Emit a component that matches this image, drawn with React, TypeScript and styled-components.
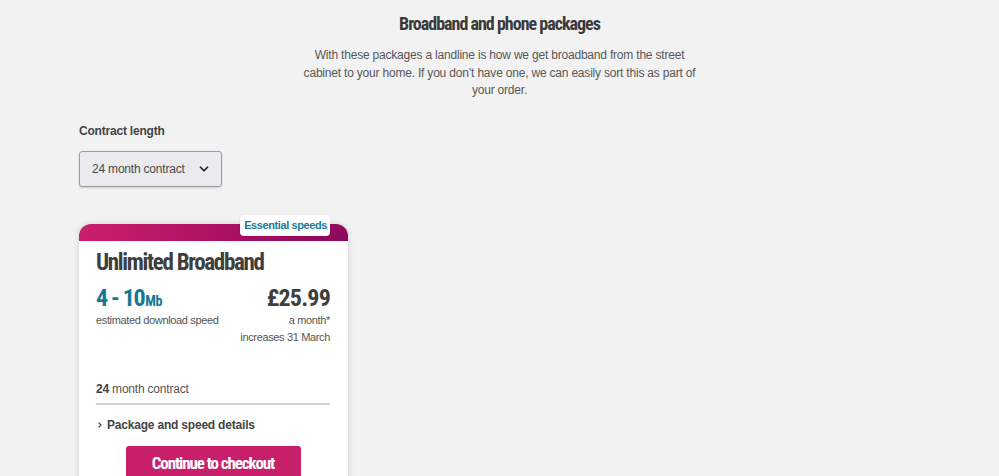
import React from 'react';
import styled, { createGlobalStyle } from 'styled-components';

const Global = createGlobalStyle`
	html, body {
		margin: 0;
		padding: 0;
		background: #f2f2f2;
		font-family: 'Liberation Sans', Arial, sans-serif;
	}
`;

const condensed = `'Roboto', 'Liberation Sans', sans-serif`;

const Page = styled.div`
	padding: 12px 79px 0;
	height: 476px;
	box-sizing: border-box;
	overflow: hidden;
`;

const Intro = styled.div`
	display: flex;
	flex-direction: column;
	align-items: center;
	text-align: center;
`;

const Heading = styled.h1`
	margin: 0;
	font-family: ${condensed};
	font-size: 18px;
	font-weight: bold;
	font-stretch: 75%;
	letter-spacing: -1px;
	color: #3a3a3a;
	line-height: 24px;
`;

const Lead = styled.p`
	margin: 11px 0 0;
	width: 404px;
	font-size: 12px;
	letter-spacing: -0.2px;
	line-height: 17.5px;
	color: #575757;
`;

const Label = styled.div`
	margin-top: 23px;
	font-size: 12px;
	letter-spacing: -0.2px;
	line-height: 17px;
	font-weight: bold;
	color: #444;
`;

const Select = styled.div`
	margin-top: 11px;
	width: 143px;
	height: 36px;
	box-sizing: border-box;
	display: flex;
	align-items: center;
	justify-content: space-between;
	padding: 0 10px 0 12px;
	background: #ebeaee;
	border: 1px solid #9c9c9c;
	border-radius: 3px;
	box-shadow: 0 1px 2px rgba(0, 0, 0, 0.15);
	font-size: 12px;
	letter-spacing: -0.2px;
	color: #4a4a4a;
`;

const Card = styled.div`
	position: relative;
	margin-top: 37px;
	width: 269px;
	background: #fff;
	border-radius: 12px 12px 0 0;
	box-shadow: 0 0 6px rgba(0, 0, 0, 0.14);
`;

const CardBar = styled.div`
	height: 17px;
	border-radius: 12px 12px 0 0;
	background: linear-gradient(90deg, #cb1f6c 0%, #a90f62 60%, #8c0a5e 100%);
`;

const Badge = styled.div`
	position: absolute;
	top: -9px;
	right: 18px;
	padding: 4px 3px 4px 4px;
	background: #fff;
	border-radius: 4px;
	font-size: 11px;
	letter-spacing: -0.4px;
	line-height: 13px;
	font-weight: bold;
	color: #17799b;
	box-shadow: 0 0 2px rgba(0, 0, 0, 0.1);
`;

const CardBody = styled.div`
	padding: 8px 18px 40px 17px;
`;

const Title = styled.h2`
	margin: 0;
	font-family: ${condensed};
	font-size: 23px;
	font-weight: bold;
	font-stretch: 75%;
	letter-spacing: -1.3px;
	color: #3e3e3e;
	line-height: 28px;
`;

const Figures = styled.div`
	margin-top: 7px;
	display: flex;
	justify-content: space-between;
`;

const Column = styled.div<{ $right?: boolean }>`
	display: flex;
	flex-direction: column;
	align-items: ${(p) => (p.$right ? 'flex-end' : 'flex-start')};
`;

const BigNumber = styled.div<{ $accent?: boolean }>`
	font-family: ${condensed};
	font-size: 24px;
	font-weight: bold;
	font-stretch: 75%;
	letter-spacing: ${(p) => (p.$accent ? '-1.3px' : '-0.8px')};
	line-height: 28px;
	color: ${(p) => (p.$accent ? '#137994' : '#3e3e3e')};
`;

const Unit = styled.span`
	font-size: 14px;
	line-height: 0;
	letter-spacing: -0.4px;
	margin-left: 1px;
`;

const Small = styled.div`
	font-size: 11px;
	letter-spacing: -0.35px;
	line-height: 17px;
	color: #555;
`;

const Contract = styled.div`
	margin-top: 35px;
	padding-bottom: 5px;
	border-bottom: 2px solid #d2d2d2;
	font-size: 12px;
	letter-spacing: -0.2px;
	line-height: 17px;
	color: #555;

	b {
		color: #3e3e3e;
	}
`;

const Details = styled.div`
	margin-top: 12px;
	display: flex;
	align-items: center;
	gap: 3px;
	font-size: 12px;
	letter-spacing: -0.2px;
	line-height: 17px;
	font-weight: bold;
	color: #444;
`;

const ButtonRow = styled.div`
	margin-top: 12px;
	display: flex;
	justify-content: center;
`;

const Button = styled.button`
	width: 175px;
	height: 34px;
	border: none;
	border-radius: 3px;
	background: #c81f6a;
	color: #fff;
	font-family: ${condensed};
	font-size: 17px;
	font-weight: bold;
	font-stretch: 75%;
	letter-spacing: -1.1px;
	cursor: pointer;
`;

const ChevronDown = () => (
	<svg width="14" height="14" viewBox="0 0 24 24" fill="none" stroke="#222" strokeWidth={3} strokeLinecap="round" strokeLinejoin="round">
		<path d="M6 9l6 6 6-6" />
	</svg>
);

const ChevronRight = () => (
	<svg width="8" height="8" viewBox="0 0 24 24" fill="none" stroke="#444" strokeWidth={3.5} strokeLinecap="round" strokeLinejoin="round">
		<path d="M9 6l6 6-6 6" />
	</svg>
);

export default function App() {
	return (
		<Page>
			<Global />
			<Intro>
				<Heading>Broadband and phone packages</Heading>
				<Lead>
					With these packages a landline is how we get broadband from the street cabinet to your home. If you don’t have
					one, we can easily sort this as part of your order.
				</Lead>
			</Intro>
			<Label>Contract length</Label>
			<Select>
				<span>24 month contract</span>
				<ChevronDown />
			</Select>
			<Card>
				<Badge>Essential speeds</Badge>
				<CardBar />
				<CardBody>
					<Title>Unlimited Broadband</Title>
					<Figures>
						<Column>
							<BigNumber $accent>
								4 - 10<Unit>Mb</Unit>
							</BigNumber>
							<Small>estimated download speed</Small>
						</Column>
						<Column $right>
							<BigNumber>£25.99</BigNumber>
							<Small>a month*</Small>
							<Small>increases 31 March</Small>
						</Column>
					</Figures>
					<Contract>
						<b>24</b> month contract
					</Contract>
					<Details>
						<ChevronRight />
						Package and speed details
					</Details>
					<ButtonRow>
						<Button>Continue to checkout</Button>
					</ButtonRow>
				</CardBody>
			</Card>
		</Page>
	);
}
